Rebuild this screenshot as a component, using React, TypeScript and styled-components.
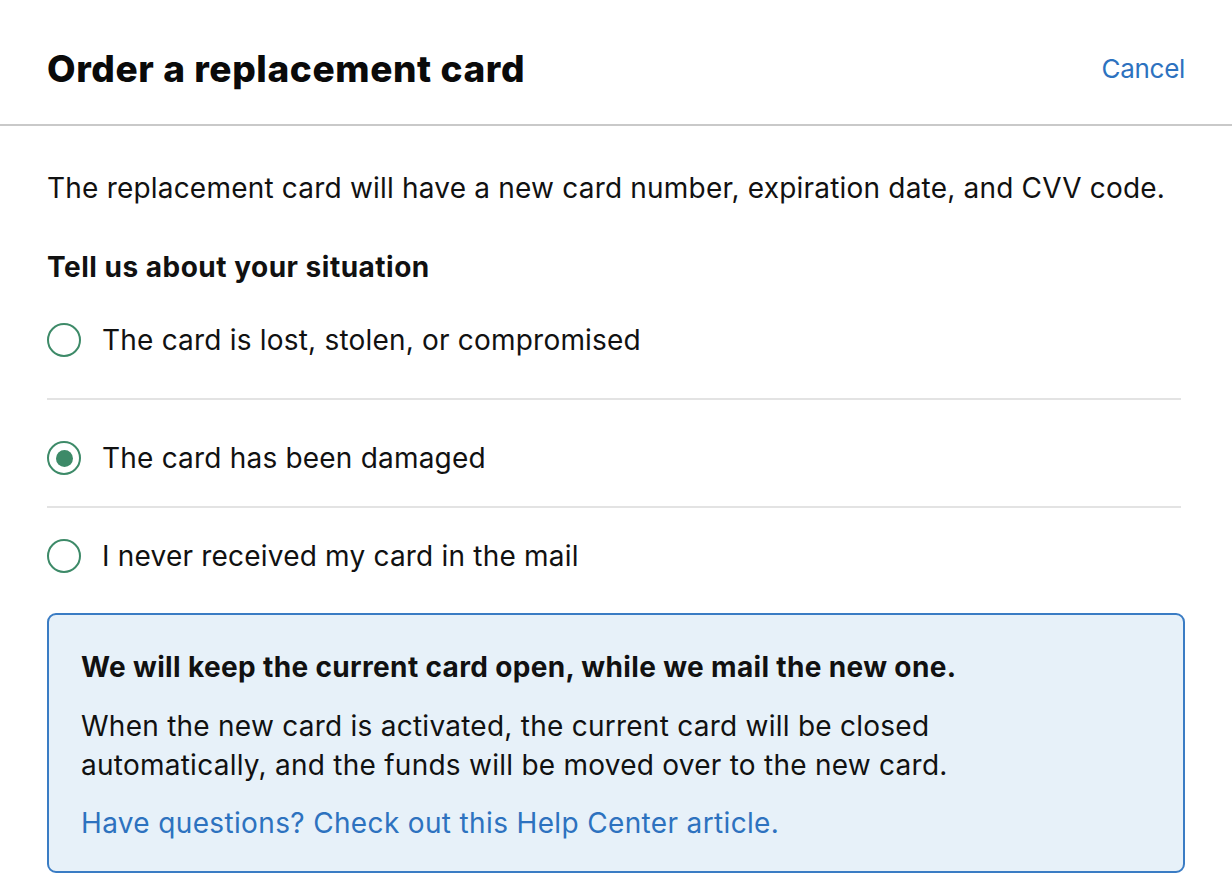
import React, { useState } from "react";
import styled, { createGlobalStyle } from "styled-components";

const Global = createGlobalStyle`
  html, body { margin: 0; padding: 0; background: #ffffff; }
  body { font-family: "Inter", "Liberation Sans", sans-serif; color: #111111; -webkit-font-smoothing: antialiased; }
  * { box-sizing: border-box; }
`;

const Page = styled.div`
  width: 1232px;
  min-height: 886px;
  background: #fff;
`;

const Header = styled.header`
  display: flex;
  align-items: center;
  justify-content: space-between;
  height: 126px;
  padding: 14px 47px 0;
  border-bottom: 2px solid #c9c9c9;
`;

const Title = styled.h1`
  margin: 0;
  font-size: 37px;
  line-height: 44px;
  font-weight: 800;
  letter-spacing: 0.6px;
  color: #0a0a0a;
`;

const CancelLink = styled.a`
  font-size: 26px;
  line-height: 36px;
  color: #2d72bf;
  text-decoration: none;
  cursor: pointer;
  letter-spacing: -0.3px;
`;

const Body = styled.main`
  padding: 44px 47px 0;
  display: flex;
  flex-direction: column;
`;

const Intro = styled.p`
  margin: 0;
  font-size: 28px;
  line-height: 36px;
  letter-spacing: 0.2px;
`;

const Subheading = styled.h2`
  margin: 43px 0 0;
  font-size: 28px;
  line-height: 36px;
  font-weight: 700;
  letter-spacing: 0.5px;
`;

const Options = styled.div`
  display: flex;
  flex-direction: column;
  padding-right: 4px;
`;

const OptionRow = styled.label<{ $pt: number; $pb: number; $divider: boolean }>`
  display: flex;
  align-items: center;
  gap: 21px;
  padding: ${(p) => p.$pt}px 0 ${(p) => p.$pb}px;
  border-bottom: ${(p) => (p.$divider ? "2px solid #e3e3e3" : "none")};
  cursor: pointer;
`;

const Radio = styled.span<{ $checked: boolean }>`
  width: 34px;
  height: 34px;
  border-radius: 50%;
  border: 2px solid #3d8a68;
  display: flex;
  align-items: center;
  justify-content: center;
  flex-shrink: 0;
  &::after {
    content: "";
    width: 17px;
    height: 17px;
    border-radius: 50%;
    background: #3d8a68;
    display: ${(p) => (p.$checked ? "block" : "none")};
  }
`;

const OptionText = styled.span`
  font-size: 28px;
  line-height: 36px;
  letter-spacing: 0.2px;
`;

const InfoBox = styled.section`
  margin-top: 39px;
  border: 2px solid #3a7cc4;
  border-radius: 9px;
  background: #e7f1f9;
  padding: 34px 32px 30px;
  display: flex;
  flex-direction: column;
`;

const InfoTitle = styled.h3`
  margin: 0;
  font-size: 28px;
  line-height: 36px;
  font-weight: 700;
  letter-spacing: 0.35px;
`;

const InfoText = styled.p`
  margin: 22px 0 0;
  font-size: 28px;
  line-height: 39px;
  letter-spacing: 0.25px;
  max-width: 880px;
`;

const HelpLink = styled.a`
  margin-top: 20px;
  font-size: 28px;
  line-height: 36px;
  color: #2d72bf;
  text-decoration: none;
  letter-spacing: 0.35px;
  cursor: pointer;
`;

const options = [
  { label: "The card is lost, stolen, or compromised", pt: 37, pb: 40 },
  { label: "The card has been damaged", pt: 40, pb: 30 },
  { label: "I never received my card in the mail", pt: 30, pb: 0 },
];

export default function App() {
  const [selected, setSelected] = useState(1);
  return (
    <Page>
      <Global />
      <Header>
        <Title>Order a replacement card</Title>
        <CancelLink>Cancel</CancelLink>
      </Header>
      <Body>
        <Intro>The replacement card will have a new card number, expiration date, and CVV code.</Intro>
        <Subheading>Tell us about your situation</Subheading>
        <Options>
          {options.map((o, i) => (
            <OptionRow
              key={o.label}
              $pt={o.pt}
              $pb={o.pb}
              $divider={i < options.length - 1}
              onClick={() => setSelected(i)}
            >
              <Radio $checked={selected === i} />
              <OptionText>{o.label}</OptionText>
            </OptionRow>
          ))}
        </Options>
        <InfoBox>
          <InfoTitle>We will keep the current card open, while we mail the new one.</InfoTitle>
          <InfoText>
            When the new card is activated, the current card will be closed automatically, and the funds will be moved over to the new card.
          </InfoText>
          <HelpLink>Have questions? Check out this Help Center article.</HelpLink>
        </InfoBox>
      </Body>
    </Page>
  );
}
